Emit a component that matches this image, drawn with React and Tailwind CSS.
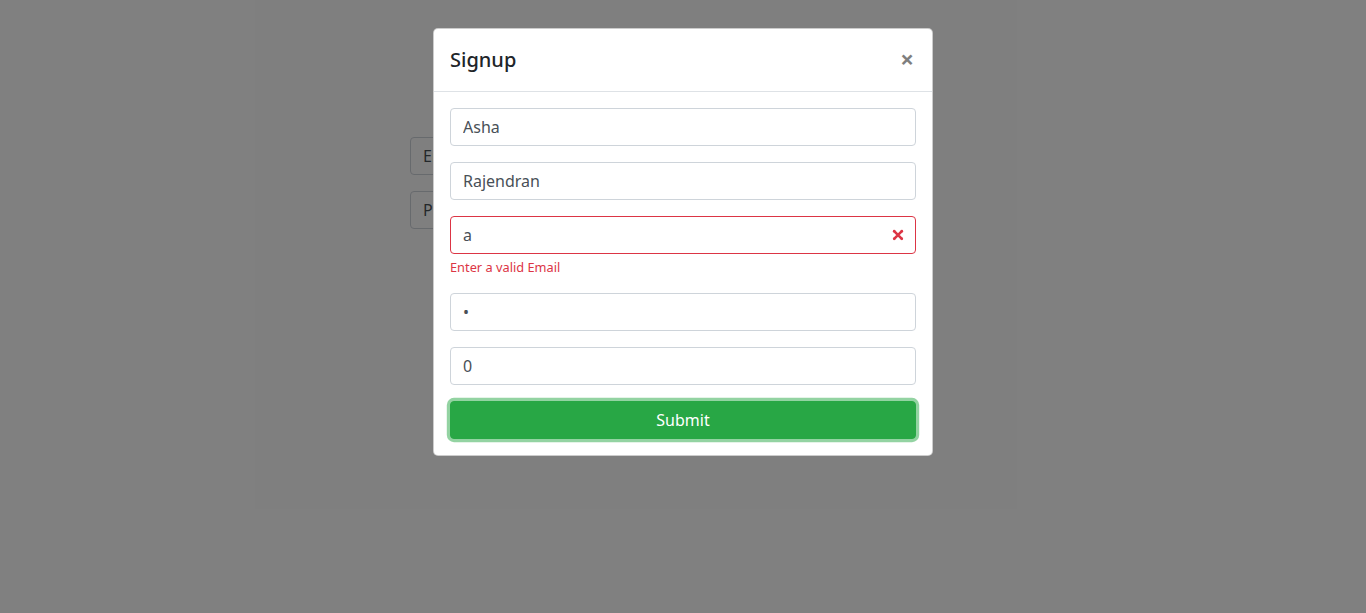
export default function App() {
  const font = { fontFamily: '"Noto Sans", "Open Sans", sans-serif' };
  const inputCls =
    "block w-full h-[38px] px-3 py-1.5 text-base leading-6 text-[#495057] bg-white border border-[#ced4da] rounded outline-none";

  return (
    <div className="relative h-[613px] w-full overflow-hidden bg-white" style={font}>
      {/* page behind the modal */}
      <div className="ml-[410px] w-[420px] pt-[137px] flex flex-col gap-4">
        <input className={inputCls + " placeholder:text-[#495057]"} placeholder="Enter Email" readOnly />
        <input className={inputCls + " placeholder:text-[#495057]"} placeholder="Password" readOnly />
      </div>

      {/* backdrop */}
      <div className="absolute inset-0 bg-black/50" />

      {/* modal */}
      <div className="absolute inset-0 flex justify-center">
        <div className="mt-[28px] w-[500px] self-start rounded-[5px] border border-black/20 bg-white">
          <div className="flex items-start justify-between border-b border-[#dee2e6] p-4">
            <h5 className="text-xl leading-[30px] font-medium text-[#212529]">Signup</h5>
            <button
              type="button"
              className="-mt-0.5 -mr-0.5 p-1 text-2xl leading-none font-bold text-black opacity-50"
            >
              ×
            </button>
          </div>

          <div className="flex flex-col p-4">
            <input className={inputCls} defaultValue="Asha" readOnly />
            <input className={inputCls + " mt-4"} defaultValue="Rajendran" readOnly />
            <div className="relative mt-4">
              <input
                className={inputCls + " border-[#dc3545] pr-9"}
                defaultValue="a"
                readOnly
              />
              <svg
                viewBox="-2 -2 7 7"
                className="absolute right-[9px] top-[10px] h-[18px] w-[18px]"
                fill="#dc3545"
              >
                <path stroke="#dc3545" d="M0 0l3 3m0-3L0 3" />
                <circle r=".5" />
                <circle cx="3" r=".5" />
                <circle cy="3" r=".5" />
                <circle cx="3" cy="3" r=".5" />
              </svg>
            </div>
            <div className="mt-1 text-[12.8px] leading-[19px] text-[#dc3545]">Enter a valid Email</div>
            <input type="password" className={inputCls + " mt-4"} defaultValue="a" readOnly />
            <input className={inputCls + " mt-4"} defaultValue="0" readOnly />
            <button
              type="button"
              className="mt-4 h-[38px] w-full rounded border border-[#28a745] bg-[#28a745] text-base leading-6 text-white shadow-[0_0_0_3.2px_rgba(40,167,69,0.5)]"
            >
              Submit
            </button>
          </div>
        </div>
      </div>
    </div>
  );
}
